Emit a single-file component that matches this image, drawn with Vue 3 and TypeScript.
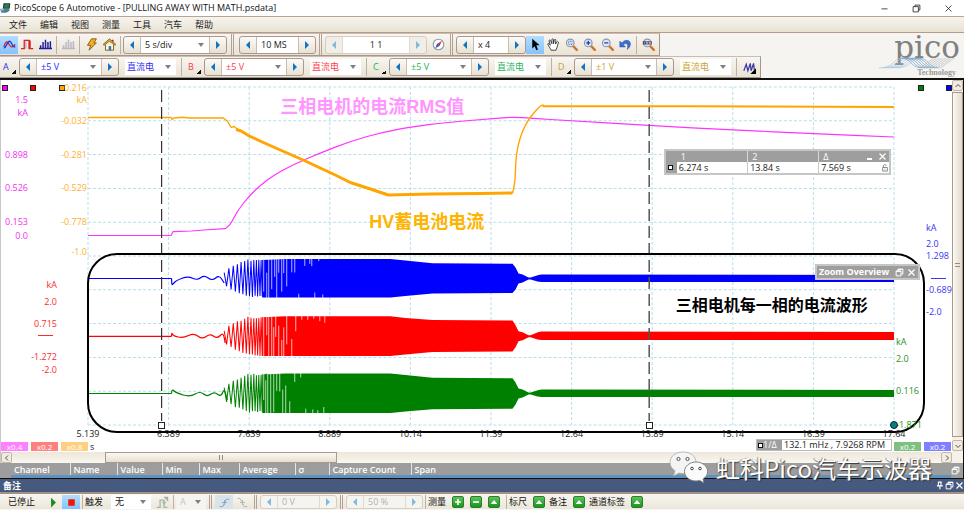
<script setup lang="ts">
interface Tick { t: string; y: number }
interface Axis { cls: string; ticks: Tick[]; dash?: number }
type Pt = [number, number]

const X0 = 88
const Y0 = 87
const W = 805
const H = 338

const px = (x: number): string => `${((x - X0) / W) * 100}%`
const py = (y: number): string => `${((y - Y0) / H) * 100}%`

const menus = ['文件', '编辑', '视图', '测量', '工具', '汽车', '帮助']
const channels = [
  { id: 'A', cls: 'ch-a', range: '±5 V' },
  { id: 'B', cls: 'ch-b', range: '±5 V' },
  { id: 'C', cls: 'ch-c', range: '±5 V' },
  { id: 'D', cls: 'ch-d', range: '±1 V' },
]

const leftAxes: Axis[] = [
  { cls: 'magenta', ticks: [{ t: '1.5', y: 100 }, { t: 'kA', y: 113 }, { t: '0.898', y: 155 }, { t: '0.526', y: 188 }, { t: '0.153', y: 222 }, { t: '0.0', y: 236 }] },
  { cls: 'red', dash: 335, ticks: [{ t: 'kA', y: 285 }, { t: '2.0', y: 302 }, { t: '0.715', y: 324 }, { t: '-1.272', y: 357 }, { t: '-2.0', y: 370 }] },
  { cls: 'orange', ticks: [{ t: '0.216', y: 88 }, { t: 'kA', y: 100 }, { t: '-0.032', y: 121 }, { t: '-0.281', y: 155 }, { t: '-0.529', y: 188 }, { t: '-0.778', y: 222 }, { t: '-1.0', y: 252 }] },
]
const rightAxes: Axis[] = [
  { cls: 'green', ticks: [{ t: 'kA', y: 342 }, { t: '2.0', y: 359 }, { t: '0.116', y: 391 }, { t: '-1.871', y: 425 }] },
  { cls: 'blue', dash: 278, ticks: [{ t: 'kA', y: 228 }, { t: '2.0', y: 244 }, { t: '1.298', y: 256 }, { t: '-0.689', y: 290 }, { t: '-2.0', y: 312 }] },
]
const times = ['5.139', '6.389', '7.639', '8.889', '10.14', '11.39', '12.64', '13.89', '15.14', '16.39', '17.64']

const gridX = Array.from({ length: 11 }, (_, i) => X0 + (i * W) / 10)
const gridY = Array.from({ length: 11 }, (_, i) => Y0 + (i * H) / 10)

const line = (pts: Pt[]): string => 'M' + pts.map(([x, y]) => `${x.toFixed(1)} ${y.toFixed(1)}`).join('L')

function smooth(pts: Pt[]): string {
  let d = `M${pts[0][0]} ${pts[0][1]}`
  for (let i = 1; i < pts.length - 1; i++) {
    const mx = (pts[i][0] + pts[i + 1][0]) / 2
    const my = (pts[i][1] + pts[i + 1][1]) / 2
    d += `Q${pts[i][0]} ${pts[i][1]} ${mx} ${my}`
  }
  const last = pts[pts.length - 1]
  return d + `L${last[0]} ${last[1]}`
}

const rms = line([[88, 235.5], [171, 235.5], [173, 231.6], [191, 231], [204, 230], [225, 228.7]]) +
  smooth([[225, 228.7], [230, 225.5], [237, 211], [249, 196], [260, 185.5], [273, 175.7], [293, 164.5], [320, 153], [350, 141.3], [380, 132.7], [410, 127], [447, 122.3], [491, 118.7], [513, 117], [530, 118.3], [570, 120.7], [650, 125.7], [733, 130], [813, 133.7], [893, 137]])
const batteryIdle = line([[88, 117.5], [171, 117.5], [172, 119.5], [174, 118], [182, 117.2], [190, 118], [223, 118], [227, 121], [231, 127.5], [234, 126.5], [238, 130]])
const batteryLoad = line([[236, 129.5], [241, 131], [249, 136], [262, 142], [280, 150], [304, 160.5], [322, 169], [334, 174.5], [350, 182.5], [370, 189], [388, 195], [410, 194.6], [430, 194], [480, 193.4], [512, 193]])
const batteryRise = smooth([[512, 193], [514.5, 185], [515.3, 158], [518, 143], [522, 131], [527, 121], [534, 112], [541, 104.5], [544, 106]])

interface Phase {
  color: string; mid: number; up: number; down: number
  up2: number; down2: number; band: [number, number]; lead: Pt[]; seed: number
}
const phases: Phase[] = [
  { color: '#0000ff', mid: 278.5, up: 19.5, down: 19, up2: 14.8, down2: 14.5, band: [275, 282], seed: 3,
    lead: [[171.5, 278.5], [171.5, 285], [173, 284], [176, 280.5], [188, 276], [197, 280.5], [204, 275], [212, 281], [219, 275], [224, 283]] },
  { color: '#ff0000', mid: 336.3, up: 20, down: 19.7, up2: 15.8, down2: 15.2, band: [332, 340], seed: 11,
    lead: [[171.5, 336.3], [171.5, 332], [173, 336], [183, 338], [194, 333], [202, 339.5], [210, 333.5], [217, 339], [223, 332], [225, 343]] },
  { color: '#008000', mid: 393.5, up: 20, down: 19.5, up2: 15.3, down2: 15.3, band: [390, 397], seed: 23,
    lead: [[171.5, 393.5], [171.5, 388.5], [176, 393], [190, 397], [200, 391], [207, 397], [214, 391.5], [221, 397], [224, 388], [227, 400]] },
]

function rng(seed: number): () => number {
  let s = seed * 7919
  return () => {
    s = (s * 1103515245 + 12345) % 2147483648
    return s / 2147483648
  }
}

function chirp(p: Phase): string {
  const rand = rng(p.seed)
  const pts: Pt[] = []
  let x = 224
  let sign = p.seed % 2 ? -1 : 1
  while (x < 268) {
    const grow = Math.min(1, 0.3 + 0.7 * Math.pow((x - 224) / 24, 0.7))
    const amp = (sign < 0 ? p.up : p.down) * grow * (0.9 + rand() * 0.1)
    pts.push([x, p.mid + sign * amp])
    sign = -sign
    x += Math.max(0.9, 2.4 - (x - 224) * 0.036)
  }
  return line(pts)
}

function gaps(p: Phase): string {
  const rand = rng(p.seed + 5)
  const full = p.up + p.down + 2
  let d = ''
  let x = 263
  while (x < 325) {
    const fade = Math.max(0.15, 1 - (x - 263) / 45)
    const len = full * Math.min(1, fade * (0.5 + rand()))
    const fromTop = rand() > 0.45
    const y = fromTop ? p.mid - p.up - 1 : p.mid + p.down + 1
    d += `M${Math.round(x) + 0.5} ${y.toFixed(1)}v${(fromTop ? len : -len).toFixed(1)}`
    x += 2 + rand() * (x < 285 ? 1.5 : 5)
  }
  return d
}

function envelope(p: Phase): string {
  const top: Pt[] = [[262, p.mid - p.up + 1], [285, p.mid - p.up], [390, p.mid - p.up], [405, p.mid - p.up + 1.6], [432, p.mid - p.up2 - 0.4], [512, p.mid - p.up2],
    [515, p.mid - 11], [518, p.mid - 5], [522, p.mid - 4], [528, p.mid - 1], [530, p.mid - 1], [538, p.band[0]], [541, p.band[0] - 0.5], [893, p.band[0]]]
  const bottom: Pt[] = [[893, p.band[1]], [541, p.band[1]], [537, p.band[1] - 0.5], [530, p.mid + 1], [528, p.mid + 1], [522, p.mid + 4], [518, p.mid + 5],
    [515, p.mid + 11], [512, p.mid + p.down2], [432, p.mid + p.down2 + 0.5], [405, p.mid + p.down - 1.6], [390, p.mid + p.down], [262, p.mid + p.down]]
  return line(top.concat(bottom)) + 'Z'
}

const waves = phases.map((p) => ({
  color: p.color,
  lead: `M88 ${p.mid}H171.5` + smooth(p.lead),
  chirp: chirp(p),
  gaps: gaps(p),
  body: envelope(p),
}))

const columns = [
  { t: 'Channel', w: 70 }, { t: 'Name', w: 47 }, { t: 'Value', w: 45 }, { t: 'Min', w: 37 }, { t: 'Max', w: 40 },
  { t: 'Average', w: 56 }, { t: 'σ', w: 34 }, { t: 'Capture Count', w: 82 }, { t: 'Span', w: 0 },
]
</script>

<template>
  <div class="app">
    <svg class="defs" aria-hidden="true">
      <symbol id="i-app" viewBox="0 0 16 16">
        <path d="M5 1h10l-1 8H4z" fill="#234" /><path d="M6.500 2.500h7l-.7 5H5.800z" fill="#1d8a3a" />
        <path d="M1 10l12-1 1 3-5 3H2z" fill="#4b7f96" /><path d="M0 9h5v3H0z" fill="#8fb7c4" />
      </symbol>
      <symbol id="i-wave" viewBox="0 0 16 16">
        <path d="M1 11C3 4 5 3 7 7s4 6 8 1" fill="none" stroke="#e02020" stroke-width="1.600" />
        <path d="M1 12c3 1 4-8 7-8s3 8 7 7" fill="none" stroke="#2038d0" stroke-width="1.600" />
      </symbol>
      <symbol id="i-persist" viewBox="0 0 16 16">
        <path d="M0 13h4V3h6v10h5" fill="none" stroke="#e02020" stroke-width="1.600" />
        <path d="M6 4v9" fill="none" stroke="#8fa4e0" stroke-width="1.200" /><path d="M9.500 3v10h2.500V3z" fill="#e02020" />
      </symbol>
      <symbol id="i-spectrum" viewBox="0 0 16 16">
        <path d="M0 13h16M2 13V9M5 13V5M8 13V2M11 13V5M14 13V4" fill="none" stroke="currentColor" stroke-width="1.800" />
      </symbol>
      <symbol id="i-bolt" viewBox="0 0 16 16">
        <path d="M8 1h6l-3 5h3l-9 9 2-6H3z" fill="#f0b020" stroke="#7a4a08" stroke-width="1" />
      </symbol>
      <symbol id="i-home" viewBox="0 0 16 16">
        <path d="M3 8v7h10V8" fill="#fff4c8" stroke="#5c4a28" /><path d="M0 8l8-7 8 7-1 1-7-5-7 5z" fill="#e8b030" stroke="#5c3f10" stroke-width=".8" />
        <path d="M7 10h3v5H7z" fill="#3c6db0" /><path d="M11 2h2v3l-2-1z" fill="#a03020" />
      </symbol>
      <symbol id="i-compass" viewBox="0 0 16 16">
        <circle cx="8" cy="8" r="6.500" fill="#fff" stroke="#9099ad" stroke-width="1.400" />
        <path d="M12 3.500L9.500 9.500 7 7z" fill="#e02020" /><path d="M4 12.500L6.500 6.500 9.500 9.500z" fill="#3050c0" />
      </symbol>
      <symbol id="i-pointer" viewBox="0 0 16 16">
        <path d="M4 1v12l3-3 2 5 2-1-2-5h4z" fill="#000" />
      </symbol>
      <symbol id="i-hand" viewBox="0 0 16 16">
        <path d="M5 15C4 12 1 9 1 7.500S3 7 4 9L2.500 3.500c0-1.300 1.500-1.300 2 0L6 7V2c0-1.300 2-1.300 2 0v5l1-4.500c.4-1.200 2-1 1.900.3L10.500 7.500 12 5c.7-1.200 2.300-.5 2 .8L12.500 11 11 15z" fill="#fff" stroke="#222" stroke-width="1" />
      </symbol>
      <symbol id="i-lens" viewBox="0 0 16 16">
        <path d="M9.500 9.500l5 5" stroke="#d4742a" stroke-width="3" stroke-linecap="round" />
        <circle cx="6.500" cy="6" r="4.700" fill="#dce8f6" stroke="#8a96b8" stroke-width="1.400" />
      </symbol>
      <symbol id="i-undo" viewBox="0 0 16 16">
        <path d="M1 4v7h7L5.500 8.500c3-3.500 7-1 4.500 5.500 7-5 4-12-1.500-11C6 3.400 5 4.500 3.500 6z" fill="#3a6fd8" stroke="#2348a0" stroke-width=".6" />
      </symbol>
      <symbol id="i-noise" viewBox="0 0 16 16">
        <path d="M1 12l3-8 2 8 3-9 1 9 3-9 1 8" fill="none" stroke="#3a3aa8" stroke-width="1.500" /><path d="M16 9v7H9z" fill="#000" />
      </symbol>
      <symbol id="i-restore" viewBox="0 0 12 12">
        <path d="M4 4V1.500h6.500V8H8M1.500 4H8v6.500H1.500zM4 2h6.500M1.500 4.500H8" fill="none" stroke="currentColor" stroke-width="1.300" />
      </symbol>
      <symbol id="i-close" viewBox="0 0 12 12">
        <path d="M2 2l8 8M10 2l-8 8" fill="none" stroke="currentColor" stroke-width="1.600" />
      </symbol>
      <symbol id="i-pulse" viewBox="0 0 16 16">
        <path d="M1 14h4V5h5v9h4" fill="none" stroke="#a9b3a9" stroke-width="1.600" /><path d="M7 7l3 4 3-4z" fill="#8fca8f" /><path d="M9 1h6v6z" fill="#aaa" />
      </symbol>
      <symbol id="i-up" viewBox="0 0 12 12"><path d="M2 8.500L6 3.500l4 5z" fill="#fff" /></symbol>
      <symbol id="i-plus" viewBox="0 0 12 12"><path d="M6 2.500v7M2.500 6h7" stroke="#fff" stroke-width="2" /></symbol>
      <symbol id="i-minus" viewBox="0 0 12 12"><path d="M2.500 6h7" stroke="#fff" stroke-width="2" /></symbol>
    </svg>

    <header class="titlebar">
      <svg class="app-icon"><use href="#i-app" /></svg>
      <h1>PicoScope 6 Automotive - [PULLING AWAY WITH MATH.psdata]</h1>
      <button class="win" aria-label="Minimize"><svg viewBox="0 0 12 12"><path d="M2 6.500h8" stroke="#111" /></svg></button>
      <button class="win" aria-label="Restore"><svg viewBox="0 0 12 12"><path d="M4 3.500v-2h6.500V8H8.500M1.500 3.500h7v7h-7z" stroke="#111" /></svg></button>
      <button class="win" aria-label="Close"><svg viewBox="0 0 12 12"><path d="M2 2l8 8M10 2l-8 8" stroke="#111" /></svg></button>
    </header>

    <nav class="menubar">
      <button v-for="m in menus" :key="m">{{ m }}</button>
    </nav>

    <div class="tools">
      <div class="bars">
        <div class="bar">
          <button class="ib on" aria-label="Scope mode"><svg><use href="#i-wave" /></svg></button>
          <button class="ib" aria-label="Persistence mode"><svg><use href="#i-persist" /></svg></button>
          <button class="ib navy" aria-label="Spectrum mode"><svg><use href="#i-spectrum" /></svg></button>
          <i class="sep" />
          <button class="ib dim" aria-label="Spectrum options" disabled><svg><use href="#i-spectrum" /></svg></button>
          <i class="sep" />
          <button class="ib" aria-label="Auto setup"><svg><use href="#i-bolt" /></svg></button>
          <button class="ib" aria-label="Home"><svg><use href="#i-home" /></svg></button>
          <i class="sep" />
          <div class="spin">
            <button class="arrow prev" aria-label="Faster" />
            <span class="pick w68"><select aria-label="Timebase"><option>5 s/div</option></select></span>
            <button class="arrow next" aria-label="Slower" />
          </div>
          <i class="split" />
          <div class="spin">
            <button class="arrow prev" aria-label="Fewer samples" />
            <input class="w41" aria-label="Samples" value="10 MS">
            <button class="arrow next" aria-label="More samples" />
          </div>
          <i class="split tight" />
          <div class="spin off">
            <button class="arrow prev" aria-label="Previous waveform" disabled />
            <input class="w65 mid" aria-label="Waveform" value="1 1">
            <button class="arrow next" aria-label="Next waveform" disabled />
          </div>
          <button class="ib gap" aria-label="Navigator"><svg><use href="#i-compass" /></svg></button>
          <i class="split tight" />
          <div class="spin">
            <button class="arrow prev" aria-label="Zoom less" />
            <input class="w33" aria-label="Zoom" value="x 4">
            <button class="arrow next" aria-label="Zoom more" />
          </div>
          <button class="ib on" aria-label="Select"><svg><use href="#i-pointer" /></svg></button>
          <button class="ib" aria-label="Hand"><svg><use href="#i-hand" /></svg></button>
          <button class="ib" aria-label="Window zoom"><svg viewBox="0 0 16 16"><use href="#i-lens" /><path d="M4.500 4h4v4h-4z" fill="none" stroke="#446" stroke-dasharray="1 1" /></svg></button>
          <button class="ib" aria-label="Zoom in"><svg viewBox="0 0 16 16"><use href="#i-lens" /><path d="M4 6h5M6.500 3.500v5" stroke="#2038a0" stroke-width="1.500" /></svg></button>
          <button class="ib" aria-label="Zoom out"><svg viewBox="0 0 16 16"><use href="#i-lens" /><path d="M4 6h5" stroke="#2038a0" stroke-width="1.500" /></svg></button>
          <button class="ib" aria-label="Undo zoom"><svg><use href="#i-undo" /></svg></button>
          <i class="sep" />
          <button class="ib" aria-label="Zoom full"><svg viewBox="0 0 16 16"><use href="#i-lens" /><path d="M1 4h11v4H1z" fill="#445" /><path d="M3 5v2M5.500 5h1.500v2H5.500zM9 5h1.500v2H9z" fill="none" stroke="#dde" stroke-width=".8" /></svg></button>
        </div>

        <div class="bar">
          <template v-for="c in channels" :key="c.id">
            <button class="chan" :class="c.cls">{{ c.id }}</button>
            <div class="spin" :class="c.cls">
              <button class="arrow prev" :aria-label="`${c.id} range down`" />
              <span class="pick w64"><select :aria-label="`${c.id} range`"><option>{{ c.range }}</option></select></span>
              <button class="arrow next" :aria-label="`${c.id} range up`" />
            </div>
            <span class="pick couple" :class="c.cls"><select :aria-label="`${c.id} coupling`"><option>直流电</option></select></span>
            <i class="sep wide" />
          </template>
          <button class="ib" aria-label="Noise"><svg><use href="#i-noise" /></svg></button>
        </div>
      </div>

      <div class="logo">
        <span class="logo-name">pico</span>
        <svg class="logo-wave" viewBox="0 0 84 12" aria-hidden="true">
          <g fill="none" stroke="#a9c6de" stroke-width=".7">
            <path v-for="n in 7" :key="n" :d="`M${n * 3 - 2} 11C${n * 3 + 14} 11 ${n * 3 + 12} 1 ${n * 3 + 22} 1`" />
            <path v-for="n in 7" :key="'b' + n" :d="`M${n * 3 + 20} 1C${n * 3 + 32} 1 ${n * 3 + 30} 11 ${n * 3 + 42} 11`" stroke="#6f9fc8" />
            <path v-for="n in 8" :key="'c' + n" :d="`M${n * 3 + 40} 11l14-10`" stroke="#b5b9c0" />
          </g>
        </svg>
        <span class="logo-sub">Technology</span>
      </div>
    </div>

    <main class="scope">
      <div class="view">
        <div class="stage">
          <div class="axes left">
            <div v-for="a in leftAxes" :key="a.cls" class="axis" :class="a.cls">
              <i class="mark" />
              <span v-for="k in a.ticks" :key="k.t" class="tick" :style="{ top: py(k.y) }">{{ k.t }}</span>
              <i v-if="a.dash" class="dash" :style="{ top: py(a.dash) }" />
            </div>
          </div>

          <div class="chart">
            <svg class="traces" viewBox="88 87 805 338" preserveAspectRatio="none" role="img" aria-label="Motor phase currents">
              <g class="grid">
                <path v-for="x in gridX" :key="'x' + x" :d="`M${x} 87V425`" />
                <path v-for="y in gridY" :key="'y' + y" :d="`M88 ${y}H893`" />
              </g>
              <path :d="rms" class="t-rms" />
              <path :d="batteryIdle" class="t-bat" />
              <path :d="batteryLoad" class="t-bat heavy" />
              <path :d="batteryRise" class="t-bat" />
              <path d="M542 106.300H690L893 107" class="t-bat flat" />
              <g v-for="w in waves" :key="w.color" :stroke="w.color" fill="none">
                <path :d="w.lead" stroke-width="1.200" />
                <path :d="w.chirp" stroke-width="1" />
                <path :d="w.body" :fill="w.color" stroke="none" />
                <path :d="w.gaps" stroke="#fff" stroke-width=".7" />
              </g>
              <path d="M161.500 90V421" class="ruler" />
              <path d="M648.500 90V421" class="ruler soft" />
            </svg>

            <i class="frame" />
            <i class="handle" :style="{ left: px(161) }" />
            <i class="handle" :style="{ left: px(648) }" />
            <i class="knob" />

            <p class="note rms" :style="{ left: px(280), top: py(107) }">三相电机的电流RMS值</p>
            <p class="note bat" :style="{ left: px(369), top: py(222) }">HV蓄电池电流</p>
            <p class="note phase" :style="{ left: px(675), top: py(306) }">三相电机每一相的电流波形</p>

            <table class="rulers" :style="{ left: px(663), top: py(149) }">
              <thead><tr><th class="k" /><th>1</th><th>2</th><th>Δ <span class="ctl"><b class="min" /><svg><use href="#i-close" /></svg></span></th></tr></thead>
              <tbody><tr><td class="k"><i class="box" /></td><td>6.274 s</td><td>13.84 s</td><td>7.569 s
                <svg class="lock" viewBox="0 0 10 10"><path d="M2 5h6v4.500H2zM3 5V2.500Q5 0 7 2.500" fill="none" stroke="#888" stroke-width="1.200" /><path d="M5 6.500v1.500" stroke="#888" /></svg></td></tr></tbody>
            </table>

            <div class="overview" :style="{ top: py(264) }">
              <span>Zoom Overview</span><svg><use href="#i-restore" /></svg><svg><use href="#i-close" /></svg>
            </div>
          </div>

          <div class="axes right">
            <div v-for="a in rightAxes" :key="a.cls" class="axis" :class="a.cls">
              <i class="mark" />
              <span v-for="k in a.ticks" :key="k.t" class="tick" :style="{ top: py(k.y) }">{{ k.t }}</span>
              <i v-if="a.dash" class="dash" :style="{ top: py(a.dash) }" />
            </div>
          </div>
        </div>

        <div class="times">
          <span v-for="(t, i) in times" :key="t" :style="{ left: `${i * 10}%` }">{{ t }}</span>
        </div>

        <div class="chips">
          <span class="chip c-m">x0.4</span><span class="chip c-r">x0.2</span><span class="chip c-o">x0.8</span>
          <span class="unit">s</span>
          <div class="freq"><span class="fk"><i class="box" />1/Δ</span><span class="fv">132.1 mHz , 7.9268 RPM</span></div>
          <span class="chip c-g">x0.2</span><span class="chip c-b">x0.2</span>
        </div>

        <div class="hscroll">
          <button class="sb" aria-label="Scroll left"><svg viewBox="0 0 8 8"><path d="M5 1.500L2.500 4 5 6.500" /></svg></button>
          <div class="htrack"><i class="hthumb"><b /></i></div>
          <button class="sb" aria-label="Scroll right"><svg viewBox="0 0 8 8"><path d="M3 1.500L5.500 4 3 6.500" /></svg></button>
        </div>
      </div>

      <div class="vscroll">
        <button class="sb" aria-label="Scroll up"><svg viewBox="0 0 8 8"><path d="M1.500 5L4 2.500 6.500 5" /></svg></button>
        <div class="vthumb"><b /></div>
        <button class="sb" aria-label="Scroll down"><svg viewBox="0 0 8 8"><path d="M1.500 3L4 5.500 6.500 3" /></svg></button>
      </div>
    </main>

    <div class="measures">
      <table>
        <thead><tr><th v-for="c in columns" :key="c.t" :style="c.w ? { width: `${c.w}px` } : {}"><span>{{ c.t }}</span></th></tr></thead>
      </table>
      <svg class="float"><use href="#i-restore" /></svg>
    </div>

    <div class="notes">
      <span>备注</span>
      <button aria-label="Pin"><svg viewBox="0 0 12 12"><path d="M4 1.500h5M4.500 1.500V6M8 1.500V6M2.500 6.500h8M6.500 7v4" fill="none" stroke="currentColor" stroke-width="1.500" /></svg></button>
      <button aria-label="Float"><svg><use href="#i-restore" /></svg></button>
      <button aria-label="Close notes"><svg><use href="#i-close" /></svg></button>
    </div>

    <footer class="status">
      <span class="lbl first">已停止</span>
      <button class="ib" aria-label="Start"><svg viewBox="0 0 16 16"><path d="M5 2l6 6-6 6z" fill="#1e8a1e" /></svg></button>
      <button class="ib on" aria-label="Stop"><svg viewBox="0 0 16 16"><path d="M4 4h8v8H4z" fill="#f01800" /></svg></button>
      <i class="sep" />
      <span class="lbl">触发</span>
      <span class="pick w40 after"><select aria-label="触发"><option>无</option></select></span>
      <button class="ib gap" aria-label="Advanced trigger" disabled><svg><use href="#i-pulse" /></svg></button>
      <i class="sep" />
      <span class="pick w30 off"><select aria-label="Trigger source" disabled><option>A</option></select></span>
      <i class="split tight" />
      <button class="ib faint" aria-label="Rising edge" disabled><svg viewBox="0 0 16 16"><path d="M2 13h4l4-9h4M5 8h6M8 5v6" fill="none" stroke="#8fa3c8" stroke-width="1.200" /></svg></button>
      <button class="ib" aria-label="Falling edge" disabled><svg viewBox="0 0 16 16"><path d="M2 3h3l5 10h4M5 8h6M8 5v6" fill="none" stroke="#b5b5bd" stroke-width="1.200" /></svg></button>
      <i class="split tight" />
      <div class="spin off">
        <button class="arrow prev" aria-label="Threshold down" disabled />
        <input class="w41" aria-label="Threshold" value="0 V" disabled>
        <button class="arrow next" aria-label="Threshold up" disabled />
      </div>
      <i class="split tight" />
      <div class="spin off">
        <button class="arrow prev" aria-label="Pre-trigger down" disabled />
        <input class="w41" aria-label="Pre-trigger" value="50 %" disabled>
        <button class="arrow next" aria-label="Pre-trigger up" disabled />
      </div>
      <i class="sep" />
      <span class="lbl">测量</span>
      <button class="gb" aria-label="Add measurement"><svg><use href="#i-plus" /></svg></button>
      <button class="gb" aria-label="Remove measurement"><svg><use href="#i-minus" /></svg></button>
      <button class="gb" aria-label="Edit measurement"><svg><use href="#i-up" /></svg></button>
      <i class="sep" />
      <span class="lbl">标尺</span>
      <button class="gb" aria-label="标尺"><svg><use href="#i-up" /></svg></button>
      <span class="lbl">备注</span>
      <button class="gb" aria-label="备注"><svg><use href="#i-up" /></svg></button>
      <span class="lbl">通道标签</span>
      <button class="gb" aria-label="通道标签"><svg><use href="#i-up" /></svg></button>
    </footer>

    <div class="brand">
      <svg viewBox="0 0 40 34" aria-hidden="true">
        <path d="M14 1C6.500 1 1 5.500 1 11.500c0 3.500 2 6.300 5 8.200L4.500 25l5.500-3c1.300.3 2.600.5 4 .5 7.500 0 13-4.700 13-11S21.500 1 14 1z" fill="#f4f4f4" stroke="#aaa" stroke-width=".8" />
        <circle cx="9.500" cy="8" r="1.600" fill="#fff" stroke="#555" /><circle cx="18.500" cy="8" r="1.600" fill="#fff" stroke="#555" />
        <path d="M27 11c-6.500 0-11.500 4.300-11.500 9.500S20.500 30 27 30c1.300 0 2.500-.2 3.700-.5l4.300 2.500-1-4c3-1.800 4.700-4.500 4.700-7.500C38.700 15.300 33.500 11 27 11z" fill="#fbfbfb" stroke="#777" stroke-width=".9" />
        <circle cx="23" cy="17.500" r="1.300" fill="#fff" stroke="#444" /><circle cx="31" cy="17.500" r="1.300" fill="#fff" stroke="#444" />
      </svg>
      <span>虹科Pico汽车示波器</span>
    </div>
  </div>
</template>

<style>
body { background: #f5f4f1; }
</style>

<style scoped>
.app {
  position: relative;
  display: flex;
  flex-direction: column;
  min-height: 100vh;
  overflow: hidden;
  font: 9px/12px "Open Sans", "Noto Sans CJK SC", sans-serif;
  color: #222;
  background: #f5f4f1;
}
.app *, .app *::before, .app *::after { box-sizing: border-box; }
button, input, select {
  margin: 0;
  padding: 0;
  border: 0;
  border-radius: 0;
  background: none;
  color: inherit;
  font: inherit;
  appearance: none;
  outline: 0;
}
i, b { display: block; }
.defs { position: absolute; width: 0; height: 0; }

.titlebar { display: flex; align-items: center; height: 16px; background: #fff; }
.app-icon { width: 11px; height: 12px; }
h1 { flex: 1; margin: 0 0 0 3px; font-size: 9px; line-height: 16px; font-weight: 400; color: #111; }
.win { width: 32px; height: 16px; display: grid; place-items: center; }
.win svg { width: 9px; height: 9px; fill: none; }

.menubar {
  display: flex;
  gap: 13px;
  height: 17px;
  padding-left: 9px;
  background: linear-gradient(#f6f4ef, #e8e2d2);
  border-top: 1px solid #b9a394;
  border-bottom: 1px solid #b39c8e;
}

.tools { display: flex; justify-content: space-between; height: 45px; }
.bars { display: flex; flex-direction: column; align-items: flex-start; }
.bar {
  display: flex;
  align-items: center;
  height: 23px;
  padding-right: 2px;
  background: linear-gradient(#f8f6f1, #e9e3d4);
  border-top: 1px solid #cbbbb0;
  border-right: 1px solid #a8958a;
  border-bottom: 1px solid #a8958a;
}
.ib { flex: none; width: 18px; height: 18px; display: grid; place-items: center; }
.ib svg { width: 13px; height: 13px; }
.ib.on { background: linear-gradient(#b4ddff, #85c3fb); }
.ib.faint { background: #d9e4ea; }
.ib.gap { margin-left: 2px; }
.ib.navy { color: #1c1c9c; }
.ib.dim { color: #b9b7c4; }
.sep { flex: none; width: 5px; height: 18px; position: relative; }
.sep::before { content: ""; position: absolute; left: 2px; top: 0; width: 1px; height: 100%; background: #bfb0a4; }
.sep.wide { width: 9px; }
.sep.wide::before { left: 5px; }
.split { flex: none; width: 12px; height: 21px; position: relative; }
.split::before { content: ""; position: absolute; left: 50%; margin-left: -2px; top: 0; width: 3px; height: 100%; border: solid #b3a196; border-width: 0 1px; }
.split.tight { width: 9px; }

.spin {
  flex: none;
  display: flex;
  height: 18px;
  border: 1px solid #ab988c;
  border-radius: 3px;
  background: linear-gradient(#fbfaf7, #e8e2d3);
}
.spin.off { border-color: #d5ccc4; background: #f1eee7; }
.spin input { height: 16px; padding: 0 4px; background: #fff; }
.spin input.mid { text-align: center; }
.arrow { width: 17px; height: 16px; display: grid; place-items: center; }
.arrow::before { content: ""; border: solid transparent; border-width: 4px 0; }
.arrow.prev { border-right: 1px solid #c9bdb2; }
.arrow.next { border-left: 1px solid #c9bdb2; }
.arrow.prev::before { border-right: 4px solid #1173c4; }
.arrow.next::before { border-left: 4px solid #1173c4; }
.off .arrow.prev::before { border-right-color: #82b9de; }
.off .arrow.next::before { border-left-color: #82b9de; }
.off .arrow { border-color: #e0dad2; }

.pick { flex: none; position: relative; height: 16px; background: #fff; }
.pick select { display: block; width: 100%; height: 16px; padding-left: 4px; }
.pick::after {
  content: "";
  position: absolute;
  right: 5px;
  top: 6px;
  border: solid transparent;
  border-width: 4px 3px 0;
  border-top-color: #808080;
  pointer-events: none;
}
.couple { width: 51px; margin-left: 6px; }
.couple select { padding-left: 2px; }
.after { margin-left: 4px; }
.w30 { width: 30px; }
.w33 { width: 34px; }
.w40 { width: 40px; }
.w41 { width: 41px; }
.w64 { width: 64px; }
.w65 { width: 66px; }
.w68 { width: 68px; }
.chan { flex: none; width: 19px; height: 16px; padding-left: 3px; text-align: left; position: relative; }
.chan::after { content: ""; position: absolute; right: 3px; bottom: 1px; width: 4px; height: 4px; background: linear-gradient(135deg, transparent 50%, #111 50%); }
.ch-a { color: #2b2bf5; }
.ch-b { color: #ff3b4b; }
.ch-c { color: #1cb358; }
.ch-d { color: #cda22e; }

.logo { width: 88px; height: 45px; padding-right: 4px; display: flex; flex-direction: column; align-items: flex-end; color: #808080; }
.logo-name { font: 31px/28px "DejaVu Serif", serif; }
.logo-wave { width: 82px; height: 12px; margin-top: -4px; flex: none; }
.logo-sub { margin: -1px 4px 0 0; font: bold 8px/9px "Liberation Serif", serif; color: #999; }

.scope { flex: 1; display: flex; min-height: 300px; border: solid #111; border-width: 2px 1px 0 0; background: #fff; }
.view { flex: 1; min-width: 0; display: flex; flex-direction: column; border-left: 1px solid #c8c8c8; }
.stage { flex: 1; display: grid; grid-template-columns: 87px 1fr 58px; padding-top: 7px; }
.axes { display: grid; position: relative; }
.left { grid-template-columns: 28px 29px 30px; }
.right { grid-template-columns: 30px 28px; }
.axis { position: relative; }
.tick { position: absolute; height: 12px; margin-top: -6px; white-space: nowrap; }
.left .tick { right: 1px; }
.right .tick { left: 2px; }
.mark { position: absolute; top: -2px; width: 6px; height: 6px; border: 1px solid #222; background: currentColor; }
.left .mark { left: 1px; }
.right .mark { right: 0; }
.dash { position: absolute; width: 15px; height: 1px; background: currentColor; }
.left .dash { right: 5px; }
.right .dash { left: 7px; }
.magenta { color: #f02ff0; }
.orange { color: #ffb02e; }
.red { color: #fb2c2c; }
.green { color: #249224; }
.blue { color: #3535f5; }
.magenta .mark { background: #f0f; }
.orange .mark { background: orange; }
.red .mark { background: #f00; }
.green .mark { background: #008000; }
.blue .mark { background: #00f; }

.chart { position: relative; min-width: 0; }
.traces { position: absolute; inset: 0; width: 100%; height: 100%; overflow: visible; }
.grid path { fill: none; stroke: #b9dfea; stroke-width: 1; stroke-dasharray: 3 2; }
.t-rms { fill: none; stroke: #ff33ff; stroke-width: 1.200; }
.t-bat { fill: none; stroke: #ffa500; stroke-width: 1.400; }
.t-bat.heavy { stroke-width: 3; stroke-linejoin: round; }
.t-bat.flat { stroke-width: 2; }
.ruler { stroke: #333; stroke-width: 1.200; stroke-dasharray: 12 5; }
.ruler.soft { stroke: #555; stroke-width: 1.500; }
.frame { position: absolute; left: -1px; right: -31px; top: 49%; bottom: -8px; border: 2px solid #000; border-radius: 30px; }
.handle { position: absolute; bottom: -4px; width: 7px; height: 7px; margin-left: -3px; border: 1px solid #222; background: #fff; }
.knob { position: absolute; right: -4px; bottom: -4px; width: 8px; height: 8px; border: 1px solid #123; border-radius: 50%; background: #008080; z-index: 1; }
.note { position: absolute; margin: 0; height: 24px; margin-top: -12px; line-height: 24px; white-space: nowrap; font-family: "Liberation Sans", "Noto Sans CJK SC", sans-serif; font-weight: 700; }
.note.rms { font-size: 18px; color: #ff95ff; }
.note.bat { font-size: 18px; color: #ffb400; }
.note.phase { font-size: 16px; color: #000; }

.rulers { position: absolute; width: 227px; table-layout: fixed; border-collapse: collapse; border: 2px solid #c6c6c6; background: #fff; text-align: left; }
.rulers th { height: 12px; padding: 0 0 0 4px; line-height: 11px; font-weight: 400; color: #fff; background: #9e9e9e; border-left: 1px solid #d8d8d8; position: relative; }
.rulers td { height: 11px; padding: 0 0 0 2px; line-height: 11px; border-left: 1px solid #c8c8c8; position: relative; }
.rulers .k { width: 12px; background: #9e9e9e; border: 0; }
.rulers th:nth-child(2), .rulers td:nth-child(2) { border-left: 0; }
.box { width: 5px; height: 5px; border: 1px solid #111; background: #fff; flex: none; }
.ctl { position: absolute; right: 2px; top: 1px; display: flex; align-items: flex-end; gap: 6px; }
.ctl .min { width: 5px; height: 2px; margin-bottom: 1px; background: #fff; }
.ctl svg { width: 9px; height: 9px; }
.lock { position: absolute; right: 0; top: 1px; width: 8px; height: 9px; }
.overview { position: absolute; right: -26px; display: flex; align-items: center; gap: 3px; width: 105px; height: 16px; padding: 0 2px; border: 2px solid #c6c6c6; background: #9e9e9e; color: #fff; font-weight: 700; }
.overview span { flex: 1; white-space: nowrap; }
.overview svg { width: 9px; height: 9px; }

.times { position: relative; height: 13px; margin: 0 58px 0 87px; }
.times span { position: absolute; top: 3px; width: 40px; margin-left: -20px; text-align: center; }
.chips { display: flex; align-items: flex-end; gap: 2px; height: 14px; padding: 0 1px 1px 0; position: relative; }
.chip { width: 27px; height: 9px; line-height: 10px; font-size: 8px; text-align: center; color: #fff; overflow: hidden; }
.chip + .chip { margin-left: 1px; }
.c-m { background: #ff7fff; }
.c-r { background: #ff7f7f; }
.c-o { background: #ffcf7f; }
.c-g { background: #7fbf7f; }
.c-b { background: #7f7fff; }
.unit { flex: 1; line-height: 9px; }
.freq { display: flex; height: 12px; width: 136px; border: 1px solid #bbb; background: #fff; line-height: 10px; }
.fk { display: flex; align-items: center; width: 25px; background: #9e9e9e; color: #fff; padding-left: 1px; }
.fv { padding-left: 2px; white-space: nowrap; }

.hscroll { display: flex; height: 11px; background: #f6f1e9; }
.sb { flex: none; width: 11px; height: 11px; border: 1px solid #c2b5a6; border-radius: 2px; background: #f1ece1; display: grid; place-items: center; }
.sb svg { width: 8px; height: 8px; fill: none; stroke: #554; }
.htrack { flex: 1; background: linear-gradient(#ede6da, #faf7f0); }
.hthumb { width: 25%; height: 11px; margin-left: 10%; border: 1px solid #ab9a8a; background: linear-gradient(#fbf9f5, #e6dfd0); display: grid; place-items: center; }
.hthumb b { width: 4px; height: 5px; border: solid #9a8b7d; border-width: 0 1px; }
.vscroll { flex: none; width: 11px; display: flex; flex-direction: column; gap: 1px; background: #f6f1e9; padding-bottom: 12px; }
.vthumb { flex: 1; margin-bottom: 2px; border: 1px solid #ab9a8a; background: linear-gradient(90deg, #fbf9f5, #e2dacb); display: grid; place-items: center; }
.vthumb b { width: 5px; height: 4px; border: solid #9a8b7d; border-width: 1px 0; }

.measures { position: relative; height: 16px; background: #9d9d9d; border-bottom: 1px solid #111; border-right: 1px solid #111; color: #fff; }
.measures::after { content: ""; position: absolute; left: 11px; right: 12px; bottom: 0; height: 3px; background: #5f92bf; }
.measures table { width: 100%; table-layout: fixed; border-collapse: collapse; text-align: left; }
.measures th { height: 14px; padding: 0 0 0 3px; line-height: 14px; font-weight: 600; white-space: nowrap; border-left: 1px solid #e5e5e5; }
.measures th:first-child { padding-left: 14px; border-left: 0; }
.float { position: absolute; right: 3px; top: 3px; width: 9px; height: 9px; }
.notes { display: flex; align-items: center; height: 13px; padding-left: 3px; background: #465a80; color: #fff; }
.notes span { flex: 1; font-weight: 700; }
.notes button { width: 10px; height: 12px; display: grid; place-items: center; }
.notes svg { width: 9px; height: 9px; }

.status { display: flex; align-items: center; height: 17px; margin-bottom: 1px; padding-top: 1px; background: linear-gradient(#f8f6f1, #ebe6d9); border-top: 2px solid #a39185; }
.status .spin, .status .pick, .status .pick select, .status .sep, .status .split, .status .ib { height: 14px; }
.status .spin input, .status .arrow { height: 12px; }
.status .spin.off input, .status .off, .status .off select { color: #b2b2b2; background: #f6f4ef; }
.status .pick::after { top: 5px; }
.lbl { flex: none; margin-right: 4px; color: #111; }
.lbl.first { margin: 0 9px 0 8px; }
.gb { flex: none; width: 12px; height: 12px; margin: 0 4px 0 2px; border: 1px solid #2e7d2e; border-radius: 2px; background: linear-gradient(#5cc45c, #17961c); display: grid; place-items: center; }
.gb svg { width: 10px; height: 10px; }

.brand { position: absolute; right: 32px; bottom: 25px; display: flex; align-items: center; gap: 7px; pointer-events: none; }
.brand svg { width: 40px; height: 34px; }
.brand span { font: 24px/34px "Noto Sans CJK SC", sans-serif; color: #fff; text-shadow: 1px 1px 1px #333, -1px 0 1px #888; white-space: nowrap; }
</style>
